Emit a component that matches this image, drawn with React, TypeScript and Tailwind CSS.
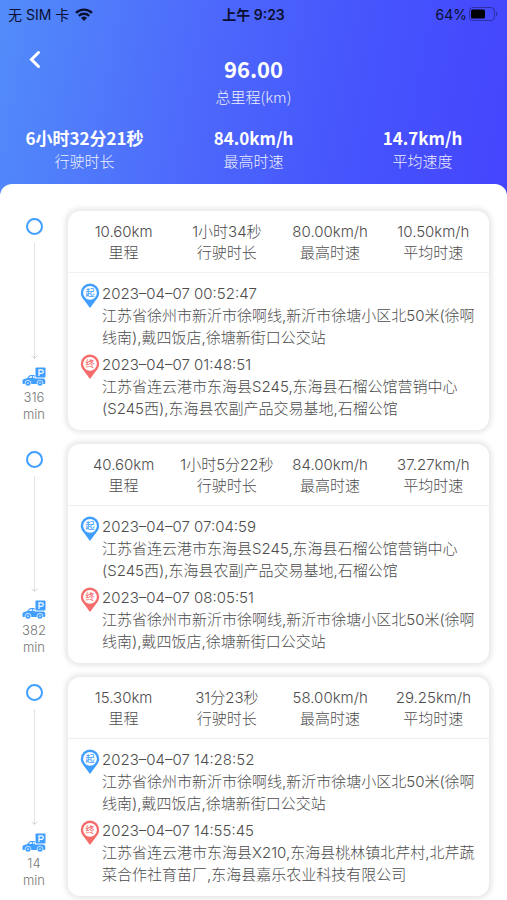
type Stop = { time: string; address: string }

type Trip = {
  id: number
  distance: string
  duration: string
  maxSpeed: string
  avgSpeed: string
  parked: string
  start: Stop
  end: Stop
}

const xinyi = '江苏省徐州市新沂市徐啊线,新沂市徐塘小区北50米(徐啊线南),戴四饭店,徐塘新街口公交站'
const donghai = '江苏省连云港市东海县S245,东海县石榴公馆营销中心(S245西),东海县农副产品交易基地,石榴公馆'

const trips: Trip[] = [
  {
    id: 1,
    distance: '10.60km',
    duration: '1小时34秒',
    maxSpeed: '80.00km/h',
    avgSpeed: '10.50km/h',
    parked: '316',
    start: { time: '2023–04–07 00:52:47', address: xinyi },
    end: { time: '2023–04–07 01:48:51', address: donghai },
  },
  {
    id: 2,
    distance: '40.60km',
    duration: '1小时5分22秒',
    maxSpeed: '84.00km/h',
    avgSpeed: '37.27km/h',
    parked: '382',
    start: { time: '2023–04–07 07:04:59', address: donghai },
    end: { time: '2023–04–07 08:05:51', address: xinyi },
  },
  {
    id: 3,
    distance: '15.30km',
    duration: '31分23秒',
    maxSpeed: '58.00km/h',
    avgSpeed: '29.25km/h',
    parked: '14',
    start: { time: '2023–04–07 14:28:52', address: xinyi },
    end: {
      time: '2023–04–07 14:55:45',
      address: '江苏省连云港市东海县X210,东海县桃林镇北芹村,北芹蔬菜合作社育苗厂,东海县嘉乐农业科技有限公司',
    },
  },
]

const summary = [
  { label: '行驶时长', value: '6小时32分21秒' },
  { label: '最高时速', value: '84.0km/h' },
  { label: '平均速度', value: '14.7km/h' },
]

function WifiIcon() {
  return (
    <svg viewBox="0 0 18 13" className="h-[13px] w-[18px]" fill="none" stroke="currentColor" aria-hidden="true">
      <path d="M1 4.8a11.6 11.6 0 0 1 16 0" strokeWidth="2.4" />
      <path d="M3.8 7.9a7.4 7.4 0 0 1 10.400 0" strokeWidth="2.3" />
      <path d="M9 13 6 10a4.3 4.3 0 0 1 6 0z" fill="currentColor" stroke="none" />
    </svg>
  )
}

function BatteryIcon() {
  return (
    <svg viewBox="0 0 30 14" className="h-[14px] w-[30px]" aria-hidden="true">
      <rect x="0.5" y="0.5" width="25" height="13" rx="3.5" fill="none" stroke="#000" strokeOpacity="0.35" />
      <rect x="2" y="2.5" width="14" height="9" rx="1.5" fill="#000" />
      <path d="M27 4.8c1.8.5 1.8 3.900 0 4.400z" fill="#000" fillOpacity="0.35" />
    </svg>
  )
}

function Pin({ text, className }: { text: string; className: string }) {
  return (
    <svg viewBox="0 0 20 26" className={`h-[26px] w-5 shrink-0 ${className}`} aria-hidden="true">
      <path d="M10 .5a9.200 9.200 0 0 1 9.200 9.300c0 3-1.400 5-3.400 7.400L10 25l-5.800-7.800C2.200 14.800.8 12.800.8 9.800A9.200 9.200 0 0 1 10 .5z" fill="currentColor" />
      <circle cx="10" cy="9.800" r="6.900" fill="#fff" />
      <text x="10" y="13.200" textAnchor="middle" fontSize="9" fontWeight="500" fill="currentColor">
        {text}
      </text>
    </svg>
  )
}

function ParkedCar() {
  return (
    <svg viewBox="0 0 24 20" className="h-5 w-6 text-[#409eff]" aria-hidden="true">
      <rect x="13.500" y="0.500" width="10" height="10" rx="0.800" fill="currentColor" />
      <path d="M17 9V2.800h2.500a1.800 1.800 0 0 1 0 3.600H17" fill="none" stroke="#fff" strokeWidth="1.200" />
      <path
        d="M.5 16.300v-2.600c0-.9.700-1.500 1.700-1.800l2.800-.7 2.300-2.600c.5-.5 1-.7 1.700-.7h3.600v3.600h8.400c1.400.3 2.300 1.200 2.300 2.400v2.200c0 .6-.4 1-1 1H1.500c-.6 0-1-.3-1-.8z"
        fill="currentColor"
      />
      <path d="M6.600 11 8.400 9h1.500v2zM10.900 9h1.400v2h-1.400z" fill="#fff" fillOpacity="0.85" />
      <g fill="currentColor" stroke="#fff" strokeWidth="0.700">
        <circle cx="6" cy="16.200" r="2.900" />
        <circle cx="18" cy="16.200" r="2.900" />
      </g>
      <g fill="#fff" fillOpacity="0.700">
        <circle cx="6" cy="16.200" r="0.900" />
        <circle cx="18" cy="16.200" r="0.900" />
      </g>
    </svg>
  )
}

function TripStop({ stop, text, className }: { stop: Stop; text: string; className: string }) {
  return (
    <div className="flex gap-0.5">
      <Pin text={text} className={className} />
      <div className="min-w-0">
        <time className="block">{stop.time}</time>
        <p>{stop.address}</p>
      </div>
    </div>
  )
}

function TripCard({ trip }: { trip: Trip }) {
  const stats = [
    { label: '里程', value: trip.distance },
    { label: '行驶时长', value: trip.duration },
    { label: '最高时速', value: trip.maxSpeed },
    { label: '平均时速', value: trip.avgSpeed },
  ]

  return (
    <li className="flex">
      <div className="flex w-[68px] shrink-0 flex-col items-center pt-[7px] text-[13px] leading-[17px] text-[#777]">
        <span className="h-[17px] w-[17px] rounded-full border-2 border-[#409eff]" />
        <div className="mt-2 flex flex-1 flex-col items-center">
          <span className="w-px flex-1 bg-[#e2e2e2]" />
          <svg viewBox="0 0 7 4" className="h-1 w-[7px]" fill="none" stroke="#d6d6d6" aria-hidden="true">
            <path d="M.5.5 3.5 3.5 6.5.5M3.5 0v3.500" />
          </svg>
        </div>
        <div className="mt-2 mb-[7px] flex flex-col items-center">
          <ParkedCar />
          <span className="mt-0.5">{trip.parked}</span>
          <span>min</span>
        </div>
      </div>

      <article className="mr-[18px] min-w-0 flex-1 rounded-xl bg-white text-[15px] shadow-[0_0_5px_3px_rgba(0,0,0,0.09)]">
        <dl className="grid grid-cols-4 border-b border-[#f0f0f0] px-1 pt-[10px] pb-[9px] text-center leading-[21px] whitespace-nowrap">
          {stats.map((s) => (
            <div key={s.label} className="flex flex-col-reverse">
              <dt>{s.label}</dt>
              <dd>{s.value}</dd>
            </div>
          ))}
        </dl>
        <div className="space-y-[5px] py-[10px] pr-2 pl-3 leading-[22px]">
          <TripStop stop={trip.start} text="起" className="text-[#409eff]" />
          <TripStop stop={trip.end} text="终" className="text-[#f56c6c]" />
        </div>
      </article>
    </li>
  )
}

export default function App() {
  return (
    <div className="bg-[linear-gradient(100deg,#528cfa_0%,#4d68fb_40%,#4554fc_70%,#4545fe_100%)] bg-[length:100%_200px] bg-no-repeat font-[Inter,'Noto_Sans_CJK_SC',sans-serif] font-light">
      <div className="grid h-7 grid-cols-3 items-center px-2 text-[14px] font-normal text-[#0b1030]">
        <div className="flex items-center gap-1.5">
          <span>无 SIM 卡</span>
          <WifiIcon />
        </div>
        <div className="text-center font-semibold">上午 9:23</div>
        <div className="flex items-center justify-end gap-0.5">
          <span>64%</span>
          <BatteryIcon />
        </div>
      </div>

      <header className="h-[156px] font-['Noto_Sans_CJK_SC',sans-serif] text-white">
        <div className="grid grid-cols-3 items-start pt-[22px]">
          <button type="button" aria-label="返回" onClick={() => window.history.back()} className="ml-6 w-6">
            <svg viewBox="0 0 24 20" className="h-5 w-6" fill="none" stroke="currentColor" strokeWidth="3" aria-hidden="true">
              <path d="M14.500 2.500 7.500 9.500l7 7" strokeLinecap="round" strokeLinejoin="miter" />
            </svg>
          </button>
          <div className="pt-0.5 text-center">
            <p className="text-[22px] leading-8 font-bold">96.00</p>
            <p className="pt-0.5 text-[15px] leading-[22px] opacity-90">总里程(km)</p>
          </div>
        </div>
        <dl className="grid grid-cols-3 pt-[18px] text-center whitespace-nowrap">
          {summary.map((s) => (
            <div key={s.label} className="flex flex-col-reverse">
              <dt className="text-[15px] leading-[22px] opacity-90">{s.label}</dt>
              <dd className="text-[17px] leading-6 font-bold">{s.value}</dd>
            </div>
          ))}
        </dl>
      </header>

      <main className="rounded-t-xl bg-white pt-[27px] pb-1 text-[#4d4d4d]">
        <ul className="space-y-[14px]">
          {trips.map((trip) => (
            <TripCard key={trip.id} trip={trip} />
          ))}
        </ul>
      </main>
    </div>
  )
}
